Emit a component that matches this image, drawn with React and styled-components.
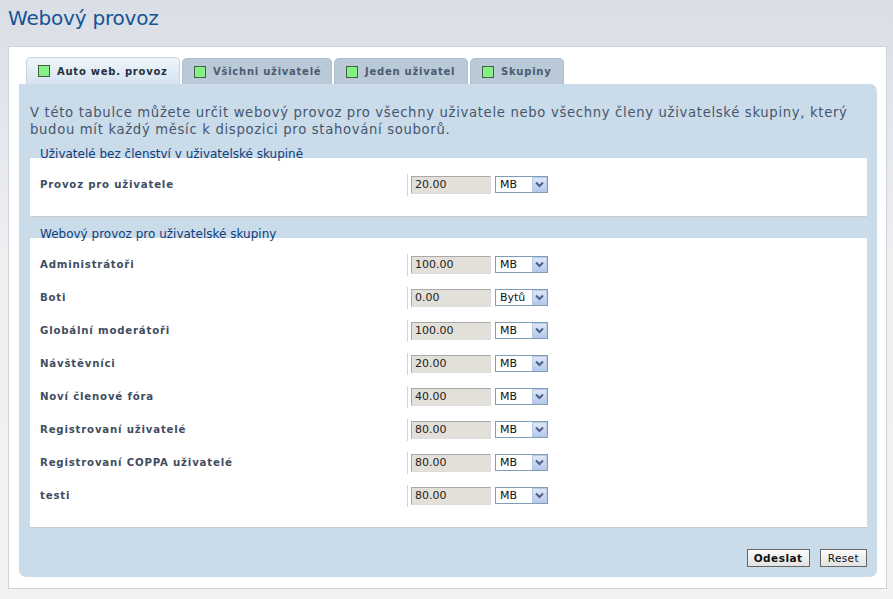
import React from 'react'
import styled, { createGlobalStyle } from 'styled-components'

const GlobalStyle = createGlobalStyle`
  html, body {
    margin: 0;
    padding: 0;
  }
  body {
    background: linear-gradient(#dadee5 0px, #eef0f2 260px, #f2f2f2 599px);
    min-height: 599px;
    font-family: "DejaVu Sans", Verdana, sans-serif;
  }
`

const Page = styled.div`
  padding: 7px 8px 0 8px;
`

const Title = styled.h1`
  margin: 0;
  height: 39px;
  font-family: "DejaVu Sans", sans-serif;
  font-weight: normal;
  font-size: 20px;
  line-height: 22px;
  color: #155397;
  letter-spacing: -0.2px;
`

const Frame = styled.div`
  background: #fff;
  border: 1px solid #cfd3d8;
  padding: 10px 9px 11px 10px;
  width: 858px;
`

const TabBar = styled.div`
  display: flex;
  gap: 2px;
  padding-left: 7px;
  height: 27px;
`

const Tab = styled.div`
  display: flex;
  align-items: center;
  gap: 7px;
  width: ${p => p.w}px;
  box-sizing: border-box;
  padding: 0 11px;
  border-radius: 5px 5px 0 0;
  font-size: 10px;
  font-weight: bold;
  letter-spacing: 0.75px;
  white-space: nowrap;
  color: ${p => (p.active ? '#24303e' : '#4a5b70')};
  background: ${p =>
    p.active ? 'linear-gradient(#f0f5fa, #d5e3ef)' : '#b9c9d7'};
  border: 1px solid ${p => (p.active ? '#c5d4e1' : '#aebfcf')};
  border-bottom: none;
  margin-top: ${p => (p.active ? 0 : 1)}px;
`

const TabIcon = styled.span`
  width: 10px;
  height: 10px;
  background: #86ef86;
  border: 1px solid #3f5d3f;
  flex: none;
`

const Panel = styled.div`
  background: #cadbea;
  border-radius: 0 7px 7px 7px;
  padding: 20px 10px 10px 11px;
`

const Intro = styled.p`
  margin: 0 0 10px 0;
  font-size: 13.2px;
  line-height: 17px;
  color: #46566c;
  letter-spacing: 0.68px;
`

const Legend = styled.div`
  font-size: 12px;
  line-height: 13px;
  color: #0f3e7c;
  padding-left: 10px;
  margin-bottom: -3px;
  position: relative;
`

const Box = styled.div`
  background: #fff;
  border-bottom: 1px solid #c8ccd0;
  padding: ${p => p.pad};
  margin-bottom: ${p => p.mb}px;
`

const Row = styled.div`
  display: grid;
  grid-template-columns: 377px 1fr;
  height: 33px;
  align-items: center;
`

const Label = styled.div`
  padding-left: 10px;
  font-size: 10.2px;
  font-weight: bold;
  letter-spacing: 0.8px;
  color: #3f4d60;
`

const Field = styled.div`
  display: flex;
  align-items: center;
  gap: 4px;
  height: 22px;
  border-left: 1px solid #d4d4d4;
  padding-left: 3px;
`

const Amount = styled.div`
  width: 80px;
  height: 18px;
  box-sizing: border-box;
  background: #e3e0d9;
  border: 1px solid #a9a9a9;
  border-right-color: #dcdcdc;
  border-bottom-color: #dcdcdc;
  font-size: 11px;
  line-height: 16px;
  padding-left: 3px;
  color: #222;
`

const Select = styled.div`
  display: flex;
  justify-content: space-between;
  align-items: center;
  width: 53px;
  height: 17px;
  box-sizing: border-box;
  background: #fff;
  border: 1px solid #7f9db9;
  font-size: 11px;
  padding-left: 4px;
  color: #111;
`

const Arrow = styled.span`
  width: 15px;
  height: 15px;
  box-sizing: border-box;
  background: linear-gradient(#dde7f7, #b6c9ee);
  border: 1px solid #b8c9e6;
  display: flex;
  align-items: center;
  justify-content: center;
`

const Actions = styled.div`
  display: flex;
  justify-content: flex-end;
  gap: 10px;
  padding-top: 21px;
`

const Button = styled.button`
  height: 18px;
  padding: 0 ${p => (p.primary ? 6 : 7)}px;
  font-family: "DejaVu Sans", Verdana, sans-serif;
  font-size: 10.5px;
  font-weight: ${p => (p.primary ? 'bold' : 'normal')};
  letter-spacing: ${p => (p.primary ? 0.5 : 0.4)}px;
  color: #111;
  background: linear-gradient(#fafafa, #e2e2e2);
  border: 1px solid #666;
  line-height: 14px;
`

const tabs = [
  { name: 'Auto web. provoz', w: 154, active: true },
  { name: 'Všichni uživatelé', w: 150 },
  { name: 'Jeden uživatel', w: 134 },
  { name: 'Skupiny', w: 94 },
]

const groups = [
  ['Administrátoři', '100.00', 'MB'],
  ['Boti', '0.00', 'Bytů'],
  ['Globální moderátoři', '100.00', 'MB'],
  ['Návštěvníci', '20.00', 'MB'],
  ['Noví členové fóra', '40.00', 'MB'],
  ['Registrovaní uživatelé', '80.00', 'MB'],
  ['Registrovaní COPPA uživatelé', '80.00', 'MB'],
  ['testi', '80.00', 'MB'],
]

function Chevron() {
  return (
    <svg width="9" height="7" viewBox="0 0 9 7">
      <path d="M1 1.5 L4.5 5 L8 1.5" fill="none" stroke="#4d6185" strokeWidth="2" />
    </svg>
  )
}

function TrafficRow({ label, value, unit }) {
  return (
    <Row>
      <Label>{label}</Label>
      <Field>
        <Amount>{value}</Amount>
        <Select>
          {unit}
          <Arrow><Chevron /></Arrow>
        </Select>
      </Field>
    </Row>
  )
}

export default function App() {
  return (
    <Page>
      <GlobalStyle />
      <Title>Webový provoz</Title>
      <Frame>
        <TabBar>
          {tabs.map(t => (
            <Tab key={t.name} w={t.w} active={t.active}>
              <TabIcon />
              {t.name}
            </Tab>
          ))}
        </TabBar>
        <Panel>
          <Intro>
            V této tabulce můžete určit webový provoz pro všechny uživatele nebo všechny členy uživatelské skupiny, který budou mít každý měsíc k dispozici pro stahování souborů.
          </Intro>
          <Legend>Uživatelé bez členství v uživatelské skupině</Legend>
          <Box pad="10px 0 15px 0" mb={11}>
            <TrafficRow label="Provoz pro uživatele" value="20.00" unit="MB" />
          </Box>
          <Legend>Webový provoz pro uživatelské skupiny</Legend>
          <Box pad="10px 0 15px 0" mb={0}>
            {groups.map(g => (
              <TrafficRow key={g[0]} label={g[0]} value={g[1]} unit={g[2]} />
            ))}
          </Box>
          <Actions>
            <Button primary>Odeslat</Button>
            <Button>Reset</Button>
          </Actions>
        </Panel>
      </Frame>
    </Page>
  )
}
